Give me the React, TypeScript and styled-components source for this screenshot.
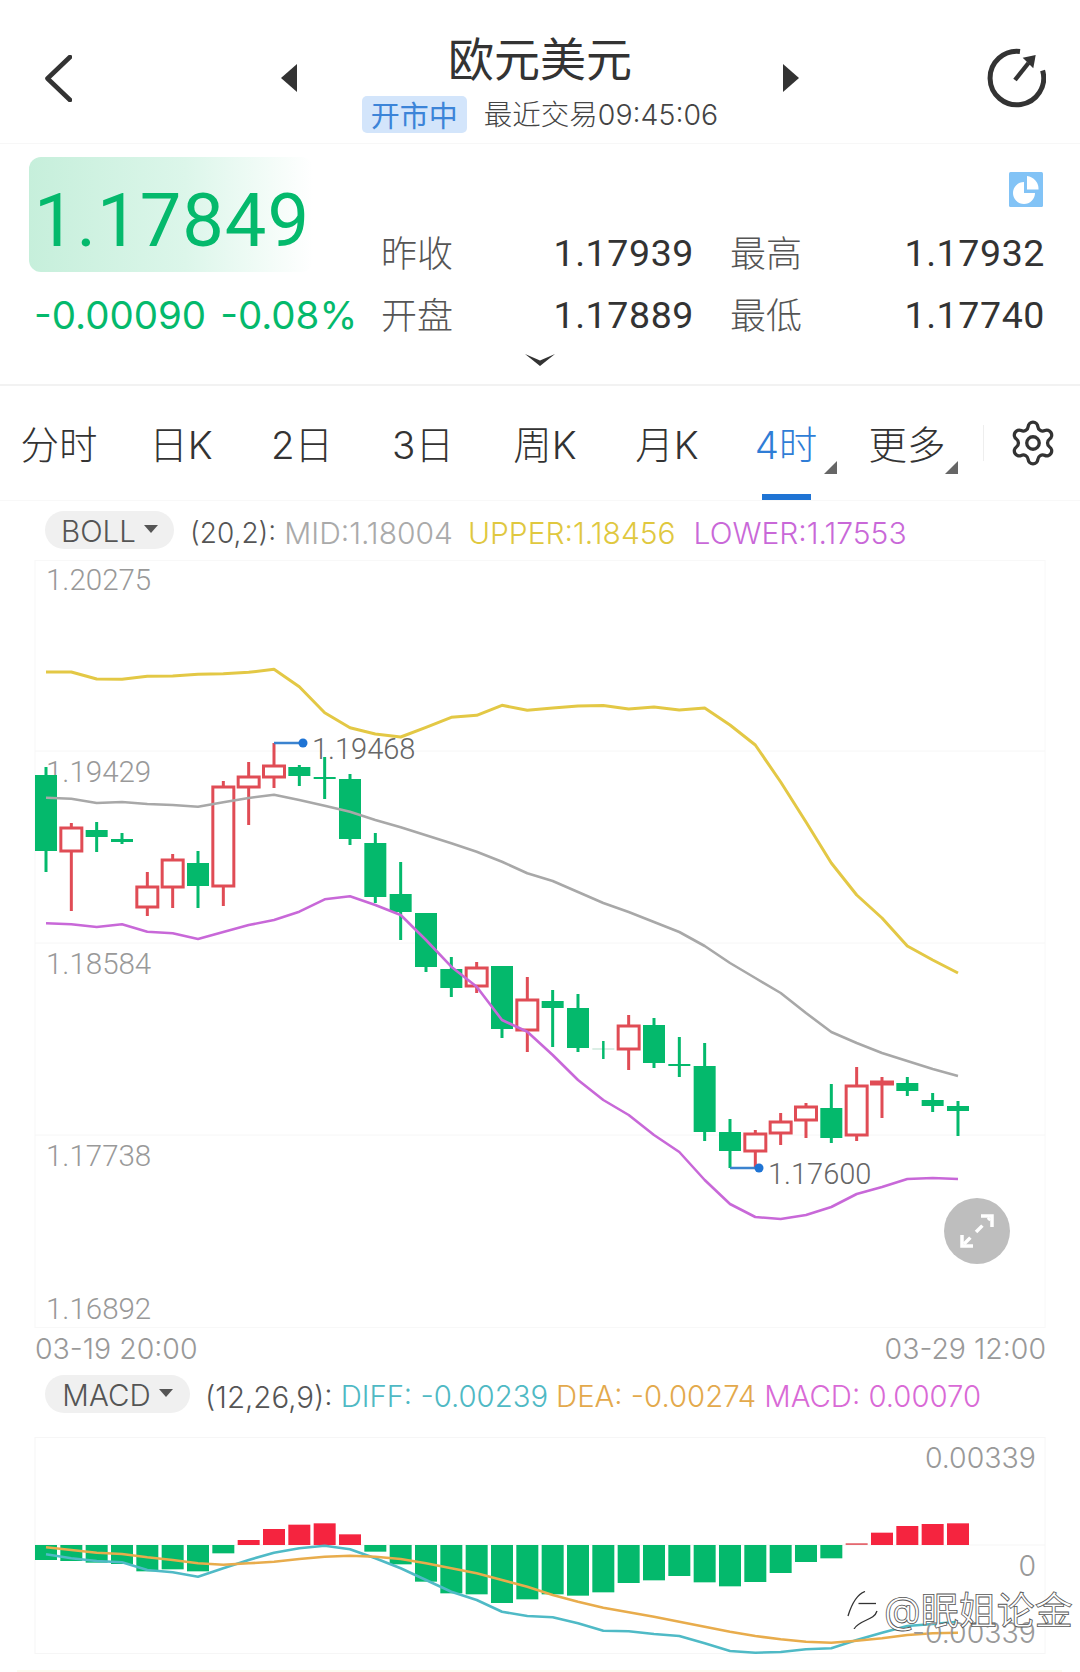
import React from "react";
import styled, { createGlobalStyle } from "styled-components";
import { Settings } from "lucide-react";

const Global = createGlobalStyle`
  html, body { margin: 0; padding: 0; background: #fff; }
  body { font-family: Inter, "Noto Sans CJK SC", sans-serif; }
`;

const GREEN = "#04b96c";
const RED = "#e04c55";
const BLUE = "#1f74d4";

const Page = styled.div`
  position: relative;
  width: 1080px;
  height: 1672px;
  overflow: hidden;
  background: #fff;
  color: #333;
`;

/* header */
const Header = styled.header`
  display: grid;
  grid-template-columns: 236px 518px 1fr;
  align-items: center;
  height: 143px;
  padding: 0 34.5px 0 45px;
  border-bottom: 1px solid #f7f7f7;
  box-sizing: content-box;
  width: 1000.5px;
`;
const HeaderEnd = styled.div`
  display: flex;
  justify-content: flex-end;
  margin-top: 13px;
`;
const BackSlot = styled.div`
  display: flex;
  margin-top: 13px;
`;
const Switcher = styled.div`
  display: flex;
  align-items: center;
  justify-content: space-between;
  margin-top: 13px;
`;
const TitleBlock = styled.div`
  display: flex;
  flex-direction: column;
  align-items: center;
  margin-top: 9px;
`;
const Title = styled.h1`
  margin: 0;
  font: 400 46px/48px "Noto Sans CJK SC", sans-serif;
  color: #333;
`;
const StatusRow = styled.div`
  display: flex;
  align-items: center;
  gap: 17px;
  margin-top: 16px;
`;
const Badge = styled.span`
  display: flex;
  align-items: center;
  justify-content: center;
  width: 105px;
  height: 37px;
  border-radius: 5px;
  background: #d3e5fb;
  color: #3c84d8;
  font: 400 29px/37px "Noto Sans CJK SC", sans-serif;
`;
const LastTrade = styled.span`
  font: 300 28.5px/37px Inter, "Noto Sans CJK SC", sans-serif;
  color: #444;
`;

/* quote */
const Quote = styled.section`
  display: flex;
  flex-direction: column;
  height: 240px;
  border-bottom: 2px solid #f2f2f2;
`;
const QuoteMain = styled.div`
  display: flex;
  height: 209px;
`;
const PriceCol = styled.div`
  display: flex;
  flex-direction: column;
  width: 352px;
  margin-left: 29px;
  padding-top: 13px;
`;
const PriceBox = styled.div`
  display: flex;
  align-items: center;
  width: 284px;
  height: 115px;
  padding: 12px 0 0 5px;
  box-sizing: border-box;
  border-radius: 12px;
  background: linear-gradient(90deg, #c6efdb 0%, #dcf6ea 55%, #ffffff 100%);
`;
const Price = styled.div`
  font: 400 74px/1 Roboto, sans-serif;
  letter-spacing: 1px;
  color: ${GREEN};
  white-space: nowrap;
`;
const Change = styled.div`
  display: flex;
  gap: 14px;
  margin: 21px 0 0 5px;
  font: 400 38.5px/44px Inter, sans-serif;
  color: ${GREEN};
  white-space: nowrap;
`;
const StatsCol = styled.div`
  display: flex;
  flex-direction: column;
  width: 664px;
`;
const PieSlot = styled.div`
  display: flex;
  justify-content: flex-end;
  height: 78px;
  padding: 28px 2px 0 0;
  box-sizing: border-box;
`;
const StatsGrid = styled.dl`
  display: grid;
  grid-template-columns: 100px 213px 36px 73px 242px;
  grid-auto-rows: 62px;
  align-items: center;
  margin: 0;
`;
const StatLabel = styled.dt<{ $second?: boolean }>`
  grid-column: ${(p) => (p.$second ? "3 / span 2" : "auto")};
  padding-left: ${(p) => (p.$second ? 36 : 0)}px;
  margin-top: -5px;
  font: 300 36px/1 "Noto Sans CJK SC", sans-serif;
  color: #555;
`;
const StatValue = styled.dd`
  margin: 2px 0 0;
  text-align: right;
  font: 400 37.5px/1 Roboto, sans-serif;
  letter-spacing: 0.6px;
  color: #333;
`;
const ChevronRow = styled.div`
  display: flex;
  justify-content: center;
`;

/* tabs */
const Tabs = styled.nav`
  display: flex;
  align-items: center;
  height: 114px;
  border-bottom: 1px solid #f8f8f8;
`;
const TabGrid = styled.div`
  display: grid;
  grid-template-columns: 118px 126px 116px 126px 118px 126px 112px 130px;
  height: 100%;
`;
const Tab = styled.div<{ $active?: boolean }>`
  position: relative;
  display: flex;
  justify-content: center;
  padding-top: 34px;
  box-sizing: border-box;
  font: 300 38.5px/50px Inter, "Noto Sans CJK SC", sans-serif;
  color: ${(p) => (p.$active ? "#2f7dd6" : "#333")};
`;
const Corner = styled.i<{ $right: number }>`
  position: absolute;
  right: ${(p) => p.$right}px;
  top: 75px;
  width: 0;
  height: 0;
  border-left: 13px solid transparent;
  border-bottom: 13px solid #666;
`;
const Underline = styled.i`
  position: absolute;
  left: 32px;
  bottom: 0;
  width: 49px;
  height: 6px;
  background: ${BLUE};
`;
const TabSep = styled.div`
  width: 1px;
  height: 36px;
  margin: 0 24px 0 11px;
  background: #eee;
`;

/* indicator rows */
const IndicatorBar = styled.div<{ $h: number; $pt: number }>`
  display: flex;
  align-items: flex-start;
  height: ${(p) => p.$h}px;
  padding: ${(p) => p.$pt}px 0 0 45px;
  box-sizing: border-box;
`;
const Pill = styled.div<{ $w: number }>`
  display: flex;
  align-items: center;
  justify-content: center;
  gap: 8px;
  width: ${(p) => p.$w}px;
  height: 38px;
  padding-top: 3px;
  box-sizing: border-box;
  border-radius: 19px;
  background: #f0f0f0;
  font: 300 29.5px/35px Inter, sans-serif;
  color: #555;
`;
const Caret = styled.i`
  width: 0;
  height: 0;
  margin-top: -6px;
  border-left: 7px solid transparent;
  border-right: 7px solid transparent;
  border-top: 8px solid #555;
`;
const Params = styled.div<{ $ml: number }>`
  display: flex;
  margin: 2px 0 0 ${(p) => p.$ml}px;
  line-height: 40px;
  font-family: Inter, sans-serif;
  font-weight: 300;
  white-space: nowrap;
`;
const Param = styled.span<{ $c: string; $ml?: number; $fs: number }>`
  color: ${(p) => p.$c};
  font-size: ${(p) => p.$fs}px;
  margin-left: ${(p) => p.$ml ?? 0}px;
`;

/* charts */
const ChartSvg = styled.svg`
  display: block;
`;
const AxisText = styled.text`
  font: 300 29.5px Roboto, sans-serif;
  fill: #999;
`;
const SideAxisText = styled.text`
  font: 300 28.5px Inter, sans-serif;
  fill: #999;
  text-anchor: end;
`;
const MarkText = styled.text`
  font: 300 29px Roboto, sans-serif;
  fill: #666;
`;
const DateRow = styled.div`
  display: flex;
  justify-content: space-between;
  align-items: center;
  height: 42px;
  padding: 0 34px 0 35px;
  font: 300 28.5px/42px Inter, sans-serif;
  color: #999;
`;
const BottomStrip = styled.div`
  position: absolute;
  left: 17px;
  right: 18px;
  bottom: 0;
  height: 2px;
  background: #fcfaf0;
`;
const Watermark = styled.div`
  position: absolute;
  left: 846px;
  top: 1589px;
  display: flex;
  align-items: center;
  gap: 4px;
  font: 400 38px/42px Inter, "Noto Sans CJK SC", sans-serif;
  color: #fff;
  -webkit-text-stroke: 0.8px #555;
  white-space: nowrap;
`;

const xi = (i: number) => 46 + 25.333 * i;

// [wickTop, wickBottom, bodyTop, bodyBottom, up?]
type C = [number, number, number, number, 0 | 1];
const candles: C[] = [
  [767, 872, 775, 851, 0],
  [823, 911, 828, 851, 1],
  [822, 852, 830, 837, 0],
  [833, 844, 839, 842, 0],
  [872, 916, 887, 907, 1],
  [854, 908, 860, 887, 1],
  [851, 908, 863, 886, 0],
  [781, 906, 787, 886, 1],
  [762, 825, 777, 787, 1],
  [743, 788, 766, 777, 1],
  [765, 786, 767, 776, 0],
  [757, 799, 777, 779, 0],
  [774, 845, 779, 839, 0],
  [833, 903, 843, 897, 0],
  [862, 940, 894, 912, 0],
  [913, 972, 913, 967, 0],
  [957, 997, 969, 988, 0],
  [962, 993, 968, 986, 1],
  [966, 1038, 966, 1029, 0],
  [977, 1052, 1000, 1030, 1],
  [990, 1047, 1001, 1008, 0],
  [994, 1052, 1008, 1048, 0],
  [1041, 1059, 1049, 1049, 0],
  [1015, 1070, 1026, 1049, 1],
  [1018, 1068, 1025, 1063, 0],
  [1037, 1077, 1064, 1066, 0],
  [1043, 1141, 1066, 1132, 0],
  [1119, 1168, 1132, 1151, 0],
  [1130, 1168, 1134, 1151, 1],
  [1113, 1145, 1122, 1133, 1],
  [1103, 1138, 1107, 1120, 1],
  [1084, 1143, 1108, 1138, 0],
  [1067, 1141, 1086, 1135, 1],
  [1077, 1118, 1082, 1084, 1],
  [1077, 1096, 1083, 1091, 0],
  [1093, 1112, 1100, 1106, 0],
  [1101, 1136, 1106, 1111, 0],
];

const z3 = (a: number[]) => a.map((Y) => 640 + Y / 3);
const upper = [
  ...z3([96, 96, 117, 118, 109, 108, 103, 101, 97, 88, 140, 218, 263, 282, 291, 262, 232, 226, 196, 211]),
  708, 706, 705.5, 709, 707, 710, 708, 725, 745, 782, 822, 863, 895, 918, 946, 960, 973,
];
const mid = [
  ...z3([473, 476, 489, 486, 492, 495, 500, 487, 474, 464, 480, 497, 515, 540, 562, 586, 610, 635, 665, 700]),
  881, 892, 903, 912, 922, 932, 946, 963, 978, 993, 1013, 1032, 1043, 1053, 1061, 1069, 1076,
];
const lower = [
  ...z3([850, 853, 861, 853, 875, 880, 897, 876, 855, 840, 815, 778, 769, 795, 825, 900, 980, 1040, 1140, 1175]),
  1055, 1080, 1100, 1115, 1135, 1152, 1180, 1204, 1217, 1219, 1215, 1207, 1194, 1187, 1179, 1178, 1179,
];

const z = (Y: number) => 1360 + Y / 3;
const bars = [
  600, 603, 608, 612, 634, 628, 634, 580, 540, 507, 494, 490, 523, 575, 613, 665, 700, 703, 729, 718,
  703, 707, 697, 669, 661, 648, 667, 679, 666, 639, 606, 595, 550, 518, 498, 492, 490,
];
const diff = [
  583, 595, 603, 607, 630, 637, 650, 625, 600, 578, 565, 557, 568, 595, 625, 660, 695, 720, 755, 768,
  772, 790, 812, 814, 822, 828, 850, 873, 878, 876, 868, 865, 840, 818, 798, 792, 785,
];
const dea = [
  562, 570, 578, 582, 592, 600, 610, 614, 610, 605, 597, 590, 587, 590, 597, 610, 625, 640, 660, 680,
  705, 725, 743, 757, 770, 785, 800, 815, 828, 838, 845, 848, 842, 835, 825, 820, 818,
];

const pts = (a: number[]) => a.map((y, i) => `${xi(i).toFixed(1)},${y.toFixed(1)}`).join(" ");

const Candle = ({ i, c }: { i: number; c: C }) => {
  const [wt, wb, bt, bb, up] = c;
  const x = xi(i);
  const color = up ? RED : GREEN;
  if (i === 22) {
    return (
      <g>
        <line x1={x - 11} x2={x + 11} y1={bt} y2={bt} stroke="#cfe9dc" strokeWidth={1.5} />
        <line x1={x} x2={x} y1={wt} y2={wb} stroke={GREEN} strokeWidth={2.5} />
      </g>
    );
  }
  return (
    <g>
      <line x1={x} x2={x} y1={wt} y2={wb} stroke={color} strokeWidth={3} />
      {up ? (
        <rect x={x - 10.5} y={bt} width={21} height={Math.max(bb - bt, 1)} fill="#fff" stroke={color} strokeWidth={3} />
      ) : (
        <rect x={x - 11} y={bt} width={22} height={Math.max(bb - bt, 1)} fill={color} />
      )}
    </g>
  );
};

const MainChart = () => (
  <ChartSvg width={1080} height={768} viewBox="0 560 1080 768">
    <rect x={35} y={560.5} width={1010} height={767} fill="none" stroke="#f8f8f8" strokeWidth={1} />
    {[751, 943, 1135].map((y) => (
      <line key={y} x1={35} x2={1045} y1={y} y2={y} stroke="#f6f6f6" strokeWidth={1} />
    ))}
    <AxisText x={46} y={590}>1.20275</AxisText>
    <AxisText x={46} y={782}>1.19429</AxisText>
    <AxisText x={46} y={974}>1.18584</AxisText>
    <AxisText x={46} y={1166}>1.17738</AxisText>
    <AxisText x={46} y={1319}>1.16892</AxisText>

    {candles.map((c, i) => (
      <Candle key={i} i={i} c={c} />
    ))}

    <polyline points={pts(upper)} fill="none" stroke="#e3c845" strokeWidth={3} strokeLinejoin="round" />
    <polyline points={pts(mid)} fill="none" stroke="#a8a8a8" strokeWidth={2.6} strokeLinejoin="round" />
    <polyline points={pts(lower)} fill="none" stroke="#c868d8" strokeWidth={2.6} strokeLinejoin="round" />

    <path d="M274 743H302" fill="none" stroke="#3b83cf" strokeWidth={2.5} />
    <circle cx={303} cy={743} r={4.5} fill={BLUE} />
    <MarkText x={312} y={759}>1.19468</MarkText>

    <path d="M730 1168H758" fill="none" stroke="#3b83cf" strokeWidth={2.5} />
    <circle cx={759} cy={1168} r={4.5} fill={BLUE} />
    <MarkText x={768} y={1184}>1.17600</MarkText>

    <circle cx={977} cy={1231} r={33} fill="#bebebe" />
    <g fill="none" stroke="#fff" strokeWidth={3.5}>
      <path d="M964 1244L990 1218" strokeDasharray="9 8" />
      <path d="M981 1216H992V1227" />
      <path d="M962 1235V1246H973" />
    </g>
  </ChartSvg>
);

const MacdChart = () => (
  <ChartSvg width={1080} height={218} viewBox="0 1437 1080 218">
    <rect x={35} y={1437.5} width={1010} height={216} fill="none" stroke="#f6f6f6" strokeWidth={1} />
    <line x1={35} x2={1045} y1={1545} y2={1545} stroke="#f5f5f5" strokeWidth={1} />
    {bars.map((Y, i) => {
      const y = z(Y);
      const zero = z(555);
      const up = y < zero;
      const thin = i === 32;
      return (
        <rect
          key={i}
          x={xi(i) - 11}
          y={up ? y : zero}
          width={22}
          height={thin ? 1.5 : Math.abs(y - zero)}
          fill={up ? (thin ? RED : "#f5243f") : GREEN}
        />
      );
    })}
    <polyline points={pts(diff.map(z))} fill="none" stroke="#4fbac6" strokeWidth={2.6} strokeLinejoin="round" />
    <polyline points={pts(dea.map(z))} fill="none" stroke="#e8ac4c" strokeWidth={2.6} strokeLinejoin="round" />
    <SideAxisText x={1036} y={1468}>0.00339</SideAxisText>
    <SideAxisText x={1036} y={1576}>0</SideAxisText>
    <SideAxisText x={1036} y={1643}>-0.00339</SideAxisText>
  </ChartSvg>
);

export default function App() {
  return (
    <Page>
      <Global />
      <Header>
        <BackSlot>
          <svg width="27" height="47" viewBox="0 0 27 47">
            <path d="M25 2L2.5 23.5L25 45" fill="none" stroke="#333" strokeWidth="4.6" strokeLinecap="round" strokeLinejoin="round" />
          </svg>
        </BackSlot>
        <Switcher>
          <svg width="16" height="28" viewBox="0 0 16 28"><path d="M16 0V28L0 14Z" fill="#333" /></svg>
          <TitleBlock>
            <Title>欧元美元</Title>
            <StatusRow>
              <Badge>开市中</Badge>
              <LastTrade>最近交易09:45:06</LastTrade>
            </StatusRow>
          </TitleBlock>
          <svg width="16" height="28" viewBox="0 0 16 28"><path d="M0 0V28L16 14Z" fill="#333" /></svg>
        </Switcher>
        <HeaderEnd>
          <svg width="60" height="60" viewBox="0 0 60 60">
            <path d="M34 3.4A26.8 26.8 0 1 0 56.6 22.5" fill="none" stroke="#333" strokeWidth="5" strokeLinecap="butt" />
            <path d="M29 32L42.5 15" fill="none" stroke="#333" strokeWidth="4.4" />
            <path d="M36.7 9.7L49.7 7L47.3 20.3Z" fill="#333" />
          </svg>
        </HeaderEnd>
      </Header>

      <Quote>
        <QuoteMain>
          <PriceCol>
            <PriceBox>
              <Price>1.17849</Price>
            </PriceBox>
            <Change>
              <span>-0.00090</span>
              <span>-0.08%</span>
            </Change>
          </PriceCol>
          <StatsCol>
            <PieSlot>
              <svg width="34" height="35" viewBox="0 0 34 35">
                <rect width="34" height="35" rx="1.5" fill="#82c3f6" />
                <path d="M15 21V10A11 11 0 1 0 26 21Z" fill="#fff" />
                <path d="M18 17.5V4A13 13 0 0 1 29.5 17.5Z" fill="#fff" />
              </svg>
            </PieSlot>
            <StatsGrid>
              <StatLabel>昨收</StatLabel>
              <StatValue>1.17939</StatValue>
              <StatLabel $second>最高</StatLabel>
              <StatValue>1.17932</StatValue>
              <StatLabel>开盘</StatLabel>
              <StatValue>1.17889</StatValue>
              <StatLabel $second>最低</StatLabel>
              <StatValue>1.17740</StatValue>
            </StatsGrid>
          </StatsCol>
        </QuoteMain>
        <ChevronRow>
          <svg width="30" height="13" viewBox="0 0 30 13">
            <path d="M0 1L15 7.5L30 1L15 13Z" fill="#333" />
          </svg>
        </ChevronRow>
      </Quote>

      <Tabs>
        <TabGrid>
          <Tab>分时</Tab>
          <Tab>日K</Tab>
          <Tab>2日</Tab>
          <Tab>3日</Tab>
          <Tab>周K</Tab>
          <Tab>月K</Tab>
          <Tab $active>
            4时
            <Corner $right={5} />
            <Underline />
          </Tab>
          <Tab>
            更多
            <Corner $right={14} />
          </Tab>
        </TabGrid>
        <TabSep />
        <Settings size={50} strokeWidth={1.6} color="#333" />
      </Tabs>

      <IndicatorBar $h={59} $pt={10}>
        <Pill $w={129}>BOLL<Caret /></Pill>
        <Params $ml={16}>
          <Param $c="#555" $fs={28}>(20,2):</Param>
          <Param $c="#aaa" $fs={30} $ml={8}>MID:1.18004</Param>
          <Param $c="#e0c83f" $fs={30} $ml={15}>UPPER:1.18456</Param>
          <Param $c="#c968d8" $fs={30} $ml={18}>LOWER:1.17553</Param>
        </Params>
      </IndicatorBar>
      <MainChart />
      <DateRow>
        <span>03-19 20:00</span>
        <span>03-29 12:00</span>
      </DateRow>
      <IndicatorBar $h={67} $pt={5}>
        <Pill $w={145}>MACD<Caret /></Pill>
        <Params $ml={15}>
          <Param $c="#555" $fs={29.5}>(12,26,9):</Param>
          <Param $c="#4fb9c4" $fs={29.3} $ml={8}>DIFF: -0.00239</Param>
          <Param $c="#e3a94c" $fs={29.3} $ml={8}>DEA: -0.00274</Param>
          <Param $c="#d96ad6" $fs={29.3} $ml={8}>MACD: 0.00070</Param>
        </Params>
      </IndicatorBar>
      <MacdChart />
      <BottomStrip />
      <Watermark>
        <svg width="34" height="38" viewBox="0 0 34 38">
          <path d="M2 25C6 12 12 3 19 0.5" fill="none" stroke="#333" strokeWidth="1.3" />
          <path d="M12.5 12.5H30" fill="none" stroke="#333" strokeWidth="1.3" />
          <path d="M31 20C28 30 14 28 8 38" fill="none" stroke="#333" strokeWidth="1.3" />
        </svg>
        <span>@眠姐论金</span>
      </Watermark>
    </Page>
  );
}
